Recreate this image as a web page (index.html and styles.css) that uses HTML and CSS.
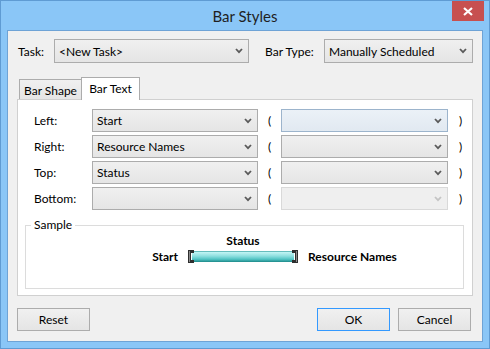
FILE: index.html
```html
<!DOCTYPE html>
<html>
<head>
<meta charset="utf-8">
<title>Bar Styles</title>
<link rel="stylesheet" href="styles.css">
</head>
<body>
<div class="window">
  <div class="titlebar">
    <span class="title">Bar Styles</span>
    <div class="close">
      <svg width="10" height="9" viewBox="0 0 10 9"><path d="M1 1 L9 8 M9 1 L1 8" stroke="#fff" stroke-width="2.2" fill="none"/></svg>
    </div>
  </div>
  <div class="client">
    <div class="toprow">
      <span class="lbl-task">Task:</span>
      <div class="sel task-sel"><span>&lt;New Task&gt;</span><svg class="chev" width="8" height="6" viewBox="0 0 8 6"><polyline points="1,1 4,4.2 7,1" fill="none" stroke="#5a5a5a" stroke-width="1.8"/></svg></div>
      <span class="lbl-type">Bar Type:</span>
      <div class="sel type-sel"><span>Manually Scheduled</span><svg class="chev" width="8" height="6" viewBox="0 0 8 6"><polyline points="1,1 4,4.2 7,1" fill="none" stroke="#5a5a5a" stroke-width="1.8"/></svg></div>
    </div>
    <div class="tabs">
      <div class="tab">Bar Shape</div>
      <div class="tab active">Bar Text</div>
    </div>
    <div class="panel">
      <div class="fields">
        <span class="flabel">Left:</span>
        <div class="sel"><span>Start</span><svg class="chev" width="8" height="6" viewBox="0 0 8 6"><polyline points="1,1 4,4.2 7,1" fill="none" stroke="#5a5a5a" stroke-width="1.8"/></svg></div>
        <span class="paren">(</span>
        <div class="sel hover"><span></span><svg class="chev" width="8" height="6" viewBox="0 0 8 6"><polyline points="1,1 4,4.2 7,1" fill="none" stroke="#5a5a5a" stroke-width="1.8"/></svg></div>
        <span class="paren close-p">)</span>

        <span class="flabel">Right:</span>
        <div class="sel"><span>Resource Names</span><svg class="chev" width="8" height="6" viewBox="0 0 8 6"><polyline points="1,1 4,4.2 7,1" fill="none" stroke="#5a5a5a" stroke-width="1.8"/></svg></div>
        <span class="paren">(</span>
        <div class="sel"><span></span><svg class="chev" width="8" height="6" viewBox="0 0 8 6"><polyline points="1,1 4,4.2 7,1" fill="none" stroke="#5a5a5a" stroke-width="1.8"/></svg></div>
        <span class="paren close-p">)</span>

        <span class="flabel">Top:</span>
        <div class="sel"><span>Status</span><svg class="chev" width="8" height="6" viewBox="0 0 8 6"><polyline points="1,1 4,4.2 7,1" fill="none" stroke="#5a5a5a" stroke-width="1.8"/></svg></div>
        <span class="paren">(</span>
        <div class="sel"><span></span><svg class="chev" width="8" height="6" viewBox="0 0 8 6"><polyline points="1,1 4,4.2 7,1" fill="none" stroke="#5a5a5a" stroke-width="1.8"/></svg></div>
        <span class="paren close-p">)</span>

        <span class="flabel">Bottom:</span>
        <div class="sel"><span></span><svg class="chev" width="8" height="6" viewBox="0 0 8 6"><polyline points="1,1 4,4.2 7,1" fill="none" stroke="#5a5a5a" stroke-width="1.8"/></svg></div>
        <span class="paren">(</span>
        <div class="sel disabled"><span></span><svg class="chev" width="8" height="6" viewBox="0 0 8 6"><polyline points="1,1 4,4.2 7,1" fill="none" stroke="#c4c4c4" stroke-width="1.8"/></svg></div>
        <span class="paren close-p">)</span>
      </div>
      <fieldset class="sample">
        <legend>Sample</legend>
        <div class="sample-top">Status</div>
        <div class="sample-row">
          <span class="s-left">Start</span>
          <svg class="bar" width="110" height="13" viewBox="0 0 110 13">
            <defs>
              <linearGradient id="cy" x1="0" y1="0" x2="0" y2="1">
                <stop offset="0" stop-color="#2f9c9c"/>
                <stop offset="0.12" stop-color="#bff3f3"/>
                <stop offset="0.45" stop-color="#8fe0e0"/>
                <stop offset="0.75" stop-color="#52c4c4"/>
                <stop offset="1" stop-color="#1c8888"/>
              </linearGradient>
            </defs>
            <rect x="4" y="1" width="102" height="11" fill="url(#cy)"/>
            <path d="M0 0 H6 V3 H3 V10 H6 V13 H0 Z" fill="#2e2e2e"/>
            <rect x="1" y="1" width="1" height="11" fill="#8a8a8a"/>
            <path d="M110 0 H104 V3 H107 V10 H104 V13 H110 Z" fill="#2e2e2e"/>
            <rect x="108" y="1" width="1" height="11" fill="#8a8a8a"/>
          </svg>
          <span class="s-right">Resource Names</span>
        </div>
      </fieldset>
    </div>
    <div class="buttons">
      <div class="btn">Reset</div>
      <div class="spacer"></div>
      <div class="btn default">OK</div>
      <div class="btn">Cancel</div>
    </div>
  </div>
</div>
</body>
</html>
```
FILE: styles.css
```css
* { box-sizing: border-box; }
html, body { margin: 0; padding: 0; }
body {
  width: 490px;
  height: 349px;
  overflow: hidden;
  font-family: Lato, "Noto Sans", sans-serif;
  font-size: 12px;
  color: #000;
}
.window {
  position: relative;
  width: 490px;
  height: 349px;
  background: #8ac6f7;
  border: 1px solid #5f9bd3;
  display: flex;
  flex-direction: column;
}
.titlebar {
  height: 29px;
  flex: none;
  display: flex;
  align-items: center;
  justify-content: center;
}
.title {
  font-size: 15px;
  color: #1f1f1f;
  line-height: 18px;
  margin-top: 1px;
}
.close {
  position: absolute;
  top: 0;
  right: 5px;
  width: 32px;
  height: 20px;
  background: #c75050;
  display: flex;
  align-items: center;
  justify-content: center;
}
.client {
  flex: 1;
  margin: 0 6px 6px 6px;
  background: #f0f0f0;
  border: 1px solid #6ea3d6;
  padding: 8px 9px 10px 9px;
  display: flex;
  flex-direction: column;
}
.toprow {
  display: flex;
  align-items: center;
  height: 24px;
  flex: none;
  padding-left: 1px;
}
.lbl-task { width: 36px; }
.lbl-type { margin-left: 16px; width: 59px; }
.sel {
  height: 24px;
  border: 1px solid #acacac;
  background: linear-gradient(#f0f0f0, #e5e5e5);
  display: flex;
  align-items: center;
  justify-content: space-between;
  padding: 0 5px 0 4px;
  white-space: nowrap;
}
.task-sel { width: 195px; }
.type-sel { width: 149px; }
.chev { flex: none; }
.tabs {
  display: flex;
  align-items: flex-end;
  margin-top: 16px;
  height: 20px;
  flex: none;
  padding-left: 2px;
  position: relative;
  z-index: 1;
}
.tab {
  height: 20px;
  width: 63px;
  border: 1px solid #acacac;
  border-bottom: none;
  background: linear-gradient(#f0f0f0, #e5e5e5);
  display: flex;
  align-items: center;
  justify-content: center;
  padding-top: 1px;
  white-space: nowrap;
}
.tab.active {
  width: 59px;
  height: 23px;
  margin-bottom: -1px;
  margin-left: -1px;
  background: #fff;
  align-items: flex-start;
  padding-top: 3px;
}
.panel {
  height: 197px;
  flex: none;
  background: #fff;
  border: 1px solid #d0d0d0;
  padding: 9px 8px 6px 7px;
  display: flex;
  flex-direction: column;
}
.fields {
  display: grid;
  grid-template-columns: 58px 166px 23px 167px auto;
  grid-auto-rows: 23px;
  row-gap: 3px;
  align-items: center;
  margin-left: 9px;
}
.fields .sel { height: 23px; }
.paren { text-align: center; color: #000; }
.close-p { margin-left: 9px; }
.sel.hover {
  border-color: #9cb4cc;
  background: linear-gradient(#ebf1f7, #e1e9f1);
}
.sel.disabled {
  border-color: #d9d9d9;
  background: #efefef;
}
.sample {
  flex: 1;
  margin: 7px 0 0 0;
  padding: 0 3px 0 0;
  border: 1px solid #dcdcdc;
  min-width: 0;
}
.sample legend {
  margin-left: 5px;
  padding: 0 3px;
  line-height: 16px;
}
.sample-top {
  text-align: center;
  font-weight: bold;
  line-height: 15px;
}
.sample-row {
  display: grid;
  grid-template-columns: 1fr auto 1fr;
  column-gap: 10px;
  align-items: center;
  font-weight: bold;
  height: 16px;
}
.s-left { text-align: right; }
.bar { display: block; }
.buttons {
  display: flex;
  margin-top: 12px;
  height: 23px;
  flex: none;
  gap: 8px;
  padding-right: 2px;
}
.spacer { flex: 1; }
.btn {
  width: 73px;
  height: 23px;
  border: 1px solid #acacac;
  background: linear-gradient(#f0f0f0, #e5e5e5);
  display: flex;
  align-items: center;
  justify-content: center;
}
.btn.default { border-color: #3399ff; }
```
